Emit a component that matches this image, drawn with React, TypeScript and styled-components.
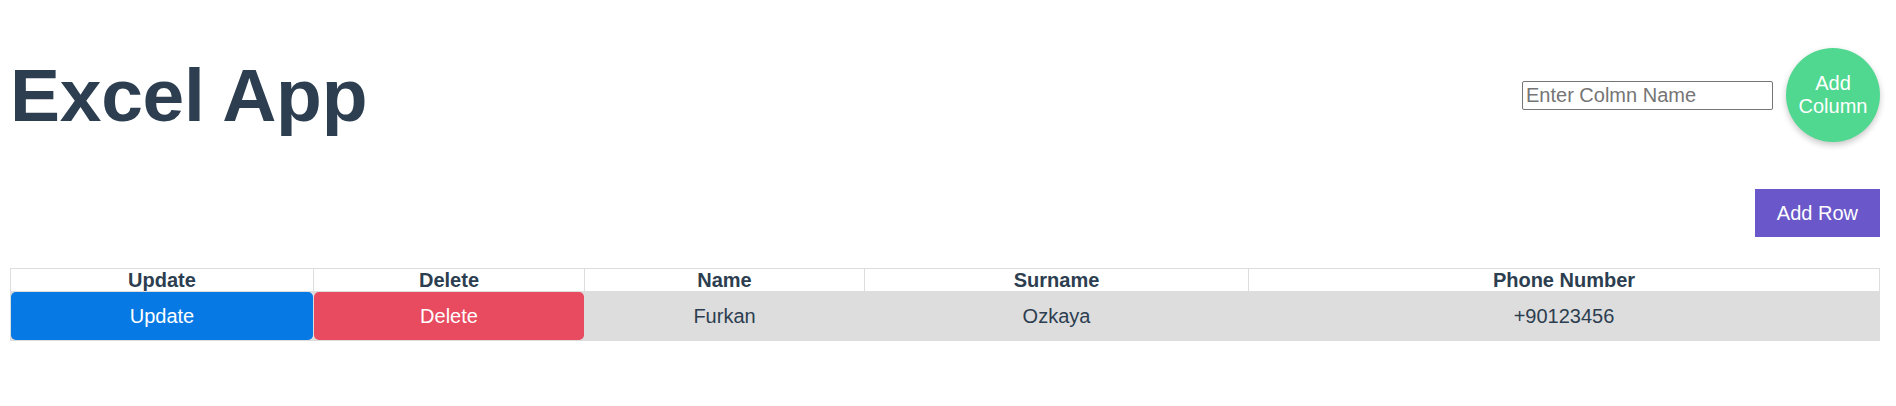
import React, { FC } from 'react';
import styled, { createGlobalStyle } from 'styled-components';

// Styles
const GlobalStyle = createGlobalStyle`
  body {
    margin: 0;
    background: #ffffff;
    font-family: "Liberation Sans", Arial, Helvetica, sans-serif;
    color: #2c3e50;
  }
`;

const Page = styled.div`
  padding: 48px 16px 0 10px;
`;

const Header = styled.header`
  display: flex;
  justify-content: space-between;
  align-items: center;
`;

const Title = styled.h1`
  margin: 0;
  font-size: 75px;
  font-weight: bold;
  letter-spacing: -0.3px;
  color: #2c3e50;
`;

const ColumnForm = styled.div`
  display: flex;
  align-items: center;
  gap: 13px;
`;

const ColumnInput = styled.input`
  box-sizing: border-box;
  width: 251px;
  height: 29px;
  padding: 1px 3px;
  border: 1px solid #767676;
  border-radius: 2px;
  font-family: inherit;
  font-size: 20px;
  color: #2c3e50;

  &::placeholder {
    color: #757575;
  }
`;

const RoundButton = styled.button`
  width: 94px;
  height: 94px;
  border: none;
  border-radius: 50%;
  background: #50d890;
  color: #ffffff;
  font-family: inherit;
  font-size: 20px;
  line-height: 23px;
  box-shadow: 0 3px 6px rgba(0, 0, 0, 0.22);
  cursor: pointer;
`;

const Toolbar = styled.div`
  display: flex;
  justify-content: flex-end;
  margin-top: 47px;
`;

const RowButton = styled.button`
  height: 48px;
  padding: 0 22px;
  border: none;
  background: #6a57c9;
  color: #ffffff;
  font-family: inherit;
  font-size: 20px;
  cursor: pointer;
`;

const Table = styled.table`
  width: 100%;
  margin-top: 31px;
  border-collapse: collapse;
  table-layout: fixed;
  font-size: 20px;
`;

const HeadCell = styled.th<{ $width?: number }>`
  width: ${({ $width }) => ($width ? `${$width}px` : 'auto')};
  padding: 0;
  border: 1px solid #dddddd;
  line-height: 22px;
  font-weight: bold;
  text-align: center;
`;

const BodyRow = styled.tr`
  background: #dddddd;
`;

const Cell = styled.td`
  height: 48px;
  padding: 0;
  border: 1px solid #dddddd;
  text-align: center;
  color: #2c3e50;
`;

const ActionButton = styled.button<{ $color: string }>`
  display: block;
  width: 100%;
  height: 48px;
  border: none;
  border-radius: 5px;
  background: ${({ $color }) => $color};
  color: #ffffff;
  font-family: inherit;
  font-size: 20px;
  cursor: pointer;
`;

// Data
const columns = [
  { title: 'Update', width: 302 },
  { title: 'Delete', width: 270 },
  { title: 'Name', width: 279 },
  { title: 'Surname', width: 383 },
  { title: 'Phone Number' },
];

const rows = [{ name: 'Furkan', surname: 'Ozkaya', phone: '+90123456' }];

// Component
const App: FC = () => (
  <>
    <GlobalStyle />
    <Page>
      <Header>
        <Title>Excel App</Title>
        <ColumnForm>
          <ColumnInput placeholder="Enter Colmn Name" />
          <RoundButton>
            Add
            <br />
            Column
          </RoundButton>
        </ColumnForm>
      </Header>

      <Toolbar>
        <RowButton>Add Row</RowButton>
      </Toolbar>

      <Table>
        <thead>
          <tr>
            {columns.map((col) => (
              <HeadCell key={col.title} $width={col.width}>
                {col.title}
              </HeadCell>
            ))}
          </tr>
        </thead>
        <tbody>
          {rows.map((row) => (
            <BodyRow key={row.phone}>
              <Cell>
                <ActionButton $color="#0779e4">Update</ActionButton>
              </Cell>
              <Cell>
                <ActionButton $color="#e84a5f">Delete</ActionButton>
              </Cell>
              <Cell>{row.name}</Cell>
              <Cell>{row.surname}</Cell>
              <Cell>{row.phone}</Cell>
            </BodyRow>
          ))}
        </tbody>
      </Table>
    </Page>
  </>
);

export default App;
